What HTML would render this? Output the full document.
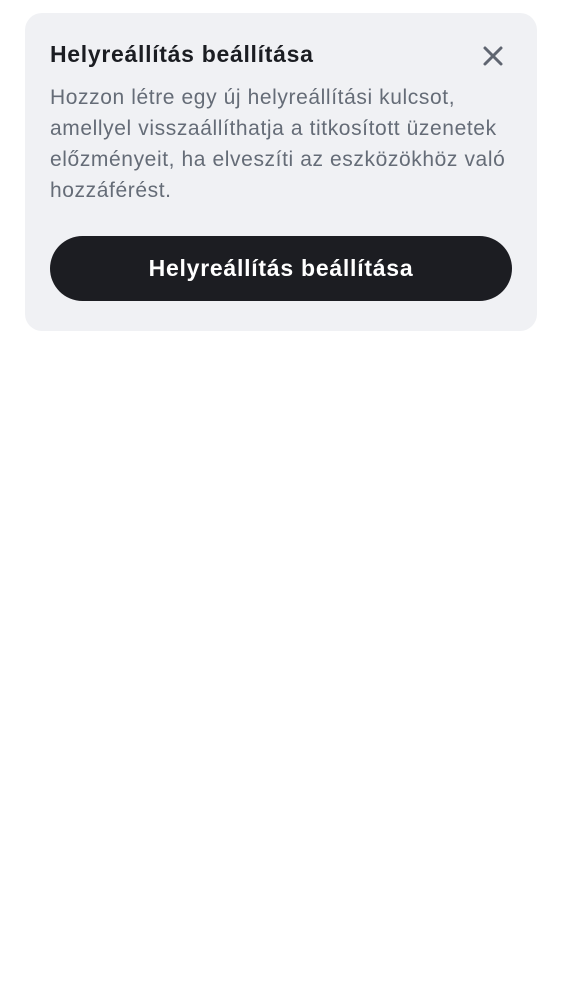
<!DOCTYPE html>
<html><head><meta charset="utf-8"><style>
body{margin:0;width:562px;height:1000px;background:#fff;font-family:"Liberation Sans",sans-serif;}
.card{position:absolute;left:25px;top:13px;width:512px;height:318px;background:#f0f1f4;border-radius:17px;}
.t{position:absolute;left:25px;top:28px;font-size:23px;font-weight:bold;color:#1b1d22;letter-spacing:0.7px;white-space:nowrap;}
.b{position:absolute;left:25px;top:69px;font-size:21px;line-height:31px;color:#656c77;letter-spacing:0.6px;white-space:nowrap;}
.btn{position:absolute;left:25px;top:223px;width:462px;height:65px;border-radius:33px;background:#1c1d22;color:#fff;font-size:23px;font-weight:bold;text-align:center;line-height:65px;letter-spacing:0.75px;}
svg{position:absolute;left:456px;top:31px;}
</style></head><body>
<div class="card">
<div class="t">Helyreállítás beállítása</div>
<svg width="24" height="24" viewBox="0 0 24 24"><path d="M4 4L20 20M20 4L4 20" stroke="#5f6570" stroke-width="3" stroke-linecap="round"/></svg>
<div class="b">Hozzon létre egy új helyreállítási kulcsot,<br>amellyel visszaállíthatja a titkosított üzenetek<br>előzményeit, ha elveszíti az eszközökhöz való<br>hozzáférést.</div>
<div class="btn">Helyreállítás beállítása</div>
</div>
</body></html>
